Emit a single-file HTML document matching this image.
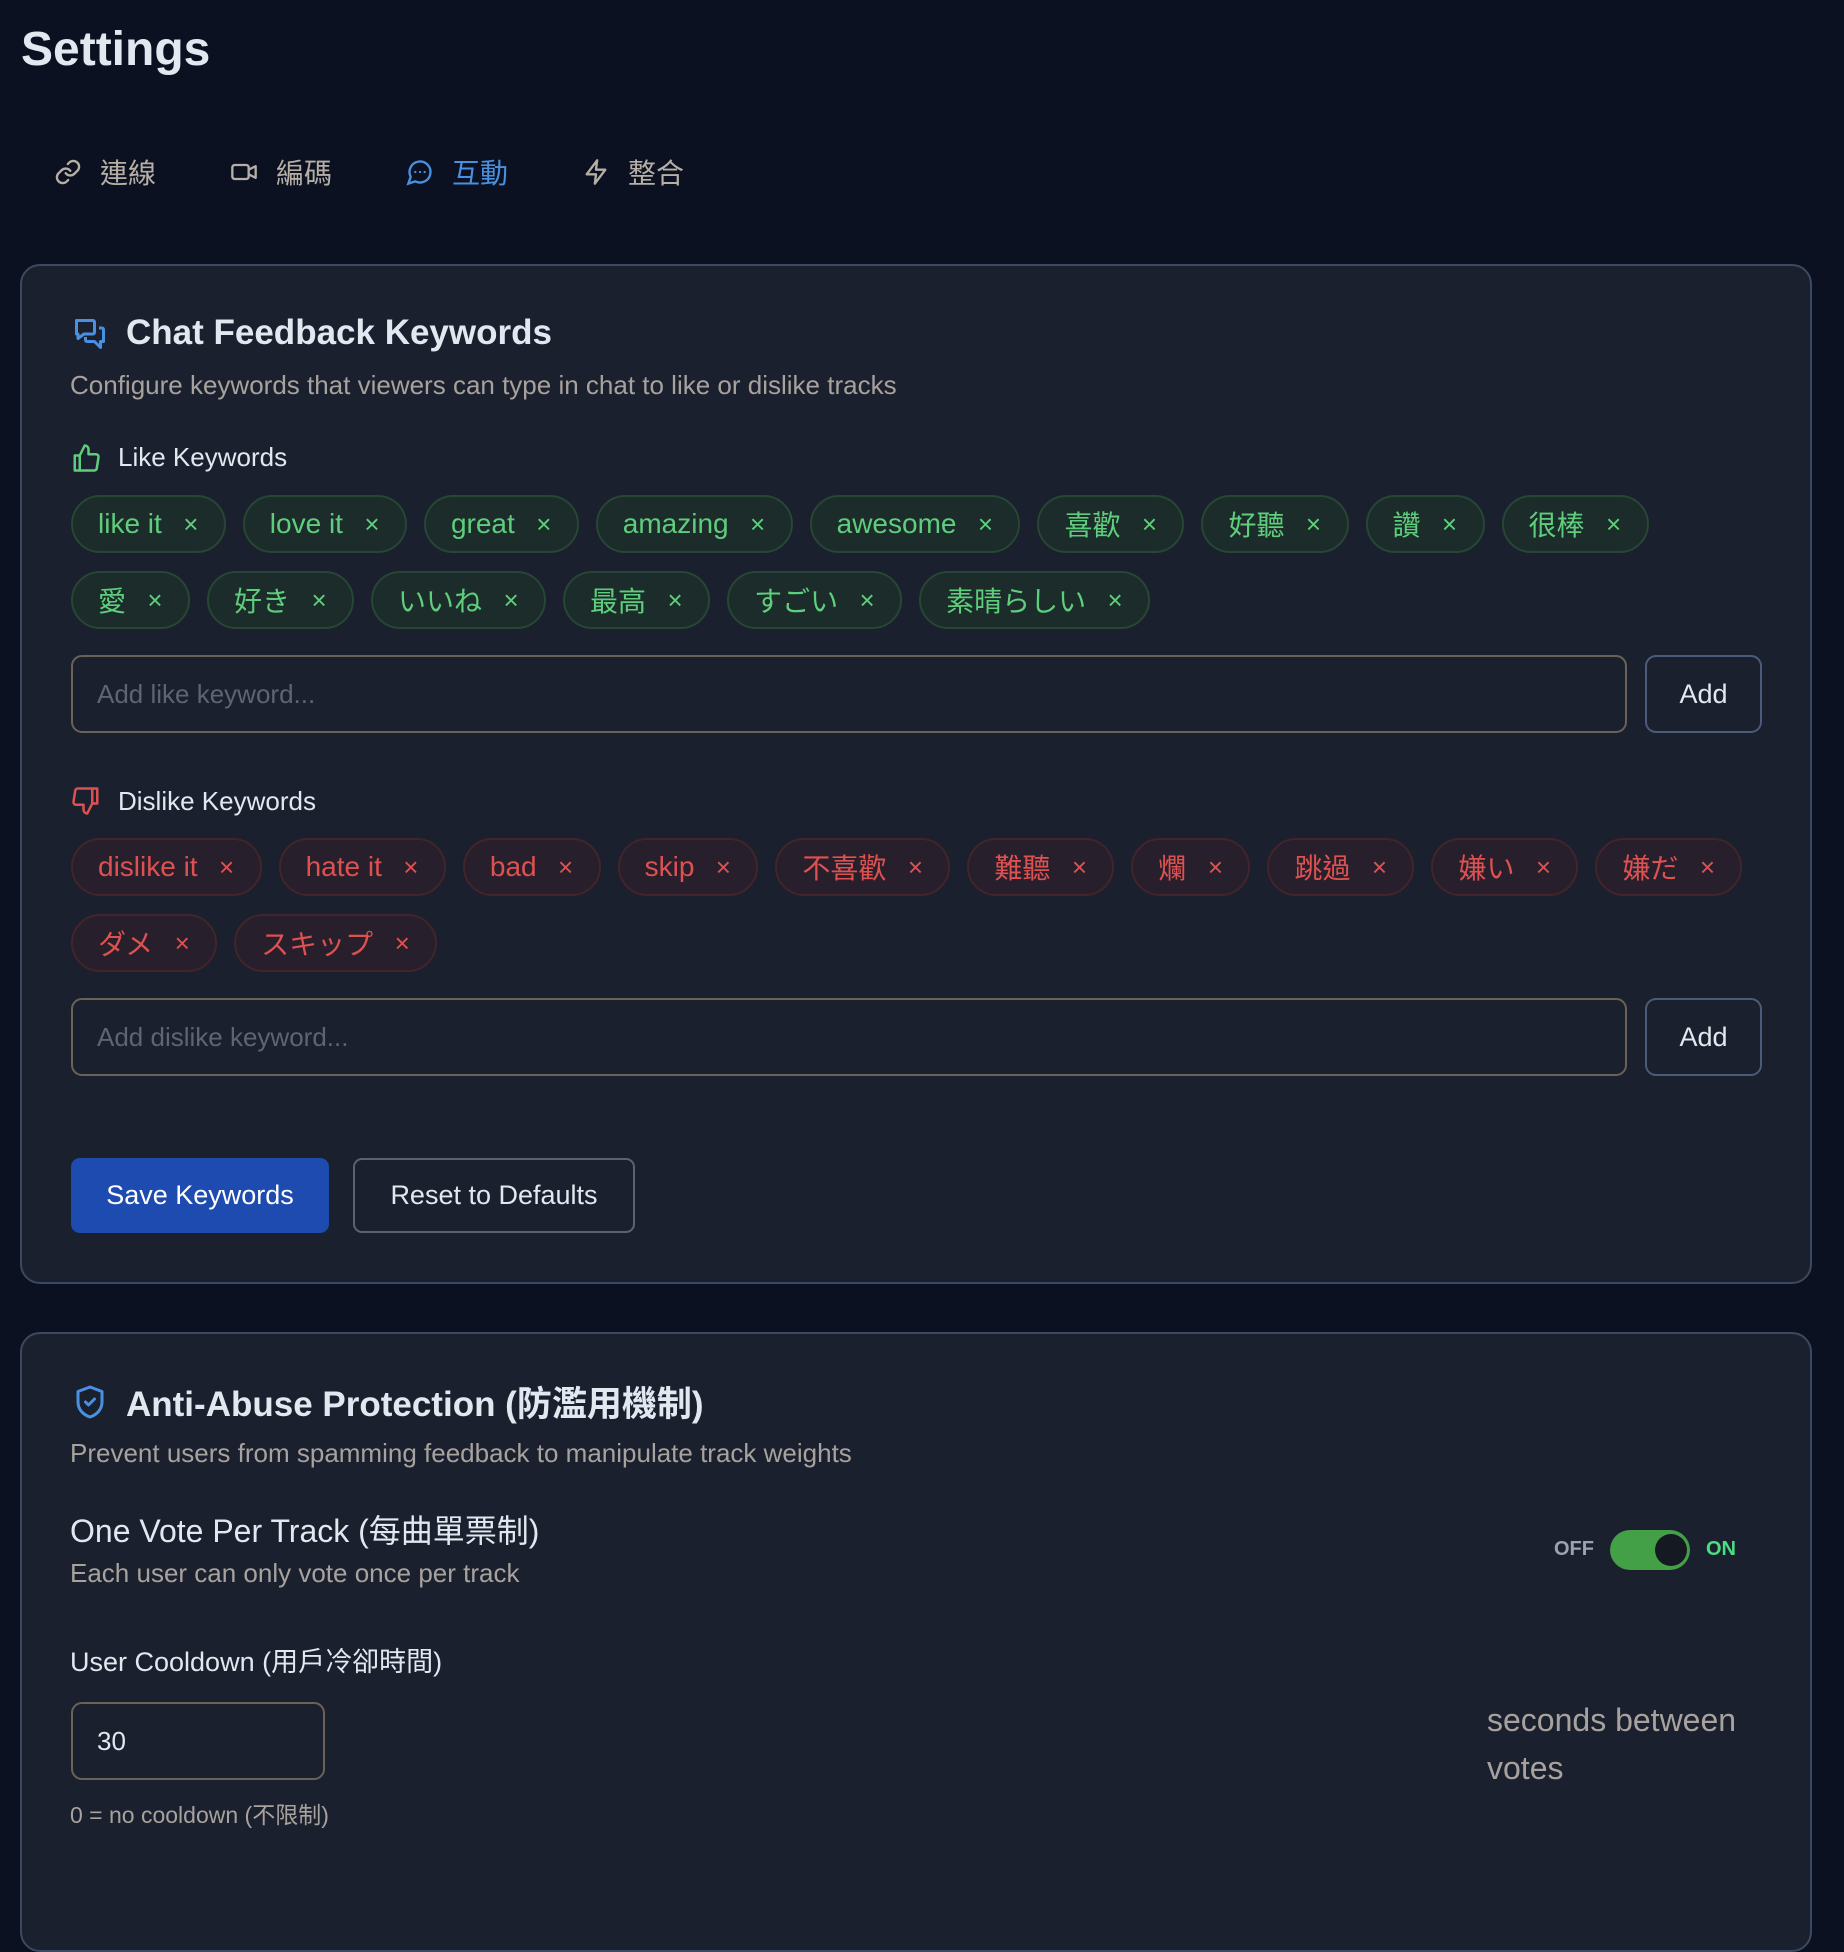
<!DOCTYPE html>
<html><head><meta charset="utf-8"><style>
*{box-sizing:border-box;margin:0;padding:0}
body{width:1844px;height:1884px;background:#0b1120;font-family:"Liberation Sans","Noto Sans CJK TC",sans-serif;color:#e2e8f0;position:relative;overflow:hidden}
.abs{position:absolute}
h1{position:absolute;left:21px;top:22px;font-size:48px;font-weight:bold;color:#e2e8f0}
.tab{position:absolute;top:152px;height:40px;display:flex;align-items:center;font-size:28px;color:#b5afa6}
.tab svg{width:28px;height:28px;margin-right:18px}
.tab.act{color:#4a90e2}
.card{position:absolute;left:20px;width:1792px;background:#1a202d;border:2px solid #3d4961;border-radius:20px}
.ttl{position:absolute;left:126px;font-size:35px;font-weight:bold;color:#e2e8f0;font-family:"Liberation Sans","Noto Sans CJK TC",sans-serif}
.sub{position:absolute;left:70px;font-size:26px;color:#a8a29e}
.lbl{position:absolute;left:118px;font-size:26px;color:#e2e8f0}
.tags{position:absolute;left:71px;width:1700px;display:flex;flex-wrap:wrap;gap:18px 17px}
.tag{height:58px;border-radius:29px;padding:0 24px 0 25px;display:flex;align-items:center;font-size:28px;white-space:nowrap}
.tag i{font-style:normal;margin-left:20px;font-size:26px;width:18px;text-align:center}
.lk{background:#1b2c2a;border:2px solid #274634;color:#5fce7c}
.dl{background:#271f2b;border:2px solid #43242b;color:#dd5151}
.inp{position:absolute;left:71px;width:1556px;height:78px;border:2px solid #6a6257;border-radius:11px;font-size:26px;color:#5e6572;padding-left:24px;display:flex;align-items:center}
.add{position:absolute;left:1645px;width:117px;height:78px;border:2px solid #4b5b79;border-radius:11px;font-size:27px;color:#e2e8f0;display:flex;align-items:center;justify-content:center}
.jp{font-family:"Liberation Sans","Noto Sans CJK JP",sans-serif}
</style></head><body>
<h1>Settings</h1>
<div class="tab" style="left:54px"><svg viewBox="0 0 24 24" fill="none" stroke="#b5afa6" stroke-width="2" stroke-linecap="round"><path d="M10 13a5 5 0 0 0 7.5.5l3-3a5 5 0 0 0-7-7l-1.7 1.7"/><path d="M14 11a5 5 0 0 0-7.5-.5l-3 3a5 5 0 0 0 7 7l1.7-1.7"/></svg>連線</div>
<div class="tab" style="left:230px"><svg viewBox="0 0 24 24" fill="none" stroke="#b5afa6" stroke-width="2" stroke-linejoin="round"><rect x="2" y="6" width="14" height="12" rx="2"/><path d="M16 10l6-3v10l-6-3"/></svg>編碼</div>
<div class="tab act" style="left:406px"><svg viewBox="0 0 24 24" fill="none" stroke="#4a90e2" stroke-width="2" stroke-linecap="round"><path d="M7.9 20A9 9 0 1 0 4 16.1L2 22z"/><path d="M8 12h.01M12 12h.01M16 12h.01"/></svg>互動</div>
<div class="tab" style="left:582px"><svg viewBox="0 0 24 24" fill="none" stroke="#b5afa6" stroke-width="2" stroke-linejoin="round"><path d="M13 2L4 14h8l-1 8 9-12h-8z"/></svg>整合</div>

<div class="card" style="top:264px;height:1020px"></div>
<svg class="abs" style="left:72px;top:316px" width="36" height="36" viewBox="0 0 24 24" fill="none" stroke="#4a90e2" stroke-width="2" stroke-linejoin="round"><path d="M3 3h11a1 1 0 0 1 1 1v7a1 1 0 0 1-1 1H8l-4 3v-3H3z"/><path d="M18 8h2a1 1 0 0 1 1 1v8h-2v4l-4-4h-5a1 1 0 0 1-1-1v-2"/></svg>
<div class="ttl" style="top:313px">Chat Feedback Keywords</div>
<div class="sub" style="top:370px">Configure keywords that viewers can type in chat to like or dislike tracks</div>
<svg class="abs" style="left:71px;top:443px" width="30" height="30" viewBox="0 0 24 24" fill="none" stroke="#5fce7c" stroke-width="2" stroke-linejoin="round"><path d="M7 10v12H3V10z"/><path d="M7 10l4-8a3 3 0 0 1 3 3v4h6a2 2 0 0 1 2 2.3l-1.4 9A2 2 0 0 1 18.6 22H7"/></svg>
<div class="lbl" style="top:442px">Like Keywords</div>
<div class="tags" style="top:495px">
<div class="tag lk">like it<i>×</i></div><div class="tag lk">love it<i>×</i></div><div class="tag lk">great<i>×</i></div><div class="tag lk">amazing<i>×</i></div><div class="tag lk">awesome<i>×</i></div><div class="tag lk">喜歡<i>×</i></div><div class="tag lk">好聽<i>×</i></div><div class="tag lk">讚<i>×</i></div><div class="tag lk">很棒<i>×</i></div>
<div class="tag lk">愛<i>×</i></div><div class="tag lk jp">好き<i>×</i></div><div class="tag lk jp">いいね<i>×</i></div><div class="tag lk">最高<i>×</i></div><div class="tag lk jp">すごい<i>×</i></div><div class="tag lk jp">素晴らしい<i>×</i></div>
</div>
<div class="inp" style="top:655px">Add like keyword...</div>
<div class="add" style="top:655px">Add</div>

<svg class="abs" style="left:71px;top:786px" width="30" height="30" viewBox="0 0 24 24" fill="none" stroke="#dd5151" stroke-width="2" stroke-linejoin="round"><path d="M17 14V2h4v12z"/><path d="M17 14l-4 8a3 3 0 0 1-3-3v-4H4a2 2 0 0 1-2-2.3l1.4-9A2 2 0 0 1 5.4 2H17"/></svg>
<div class="lbl" style="top:786px">Dislike Keywords</div>
<div class="tags" style="top:838px">
<div class="tag dl">dislike it<i>×</i></div><div class="tag dl">hate it<i>×</i></div><div class="tag dl">bad<i>×</i></div><div class="tag dl">skip<i>×</i></div><div class="tag dl">不喜歡<i>×</i></div><div class="tag dl">難聽<i>×</i></div><div class="tag dl">爛<i>×</i></div><div class="tag dl">跳過<i>×</i></div><div class="tag dl jp">嫌い<i>×</i></div><div class="tag dl jp">嫌だ<i>×</i></div>
<div class="tag dl jp">ダメ<i>×</i></div><div class="tag dl jp">スキップ<i>×</i></div>
</div>
<div class="inp" style="top:998px">Add dislike keyword...</div>
<div class="add" style="top:998px">Add</div>

<div class="abs" style="left:71px;top:1158px;width:258px;height:75px;background:#1e4bb0;border-radius:9px;font-size:27px;color:#fff;display:flex;align-items:center;justify-content:center">Save Keywords</div>
<div class="abs" style="left:353px;top:1158px;width:282px;height:75px;border:2px solid #5a6273;border-radius:9px;font-size:27px;color:#e2e8f0;display:flex;align-items:center;justify-content:center">Reset to Defaults</div>

<div class="card" style="top:1332px;height:620px"></div>
<svg class="abs" style="left:72px;top:1384px" width="36" height="36" viewBox="0 0 24 24" fill="none" stroke="#4a90e2" stroke-width="2" stroke-linejoin="round" stroke-linecap="round"><path d="M12 2l8 3v7c0 5-3.5 8.5-8 10-4.5-1.5-8-5-8-10V5z"/><path d="M9 12l2 2 4-4"/></svg>
<div class="ttl" style="top:1376px">Anti-Abuse Protection (防濫用機制)</div>
<div class="sub" style="top:1438px">Prevent users from spamming feedback to manipulate track weights</div>
<div class="abs" style="left:70px;top:1506px;font-size:32px;color:#e2e8f0">One Vote Per Track (每曲單票制)</div>
<div class="abs" style="left:70px;top:1558px;font-size:26px;color:#a8a29e">Each user can only vote once per track</div>
<div class="abs" style="left:1554px;top:1538px;font-size:20px;font-weight:bold;color:#9ca3af">OFF</div>
<div class="abs" style="left:1610px;top:1530px;width:80px;height:40px;border-radius:20px;background:#43a047"><div class="abs" style="right:3px;top:4px;width:32px;height:32px;border-radius:50%;background:#151a22"></div></div>
<div class="abs" style="left:1706px;top:1538px;font-size:20px;font-weight:bold;color:#4ade80">ON</div>
<div class="abs" style="left:70px;top:1640px;font-size:27px;color:#e2e8f0">User Cooldown (用戶冷卻時間)</div>
<div class="abs" style="left:71px;top:1702px;width:254px;height:78px;border:2px solid #6a6257;border-radius:11px;font-size:26px;color:#e2e8f0;padding-left:24px;display:flex;align-items:center">30</div>
<div class="abs" style="left:1487px;top:1696px;font-size:32px;line-height:48px;color:#a8a29e">seconds between<br>votes</div>
<div class="abs" style="left:70px;top:1796px;font-size:23px;color:#a8a29e">0 = no cooldown (不限制)</div>
</body></html>
